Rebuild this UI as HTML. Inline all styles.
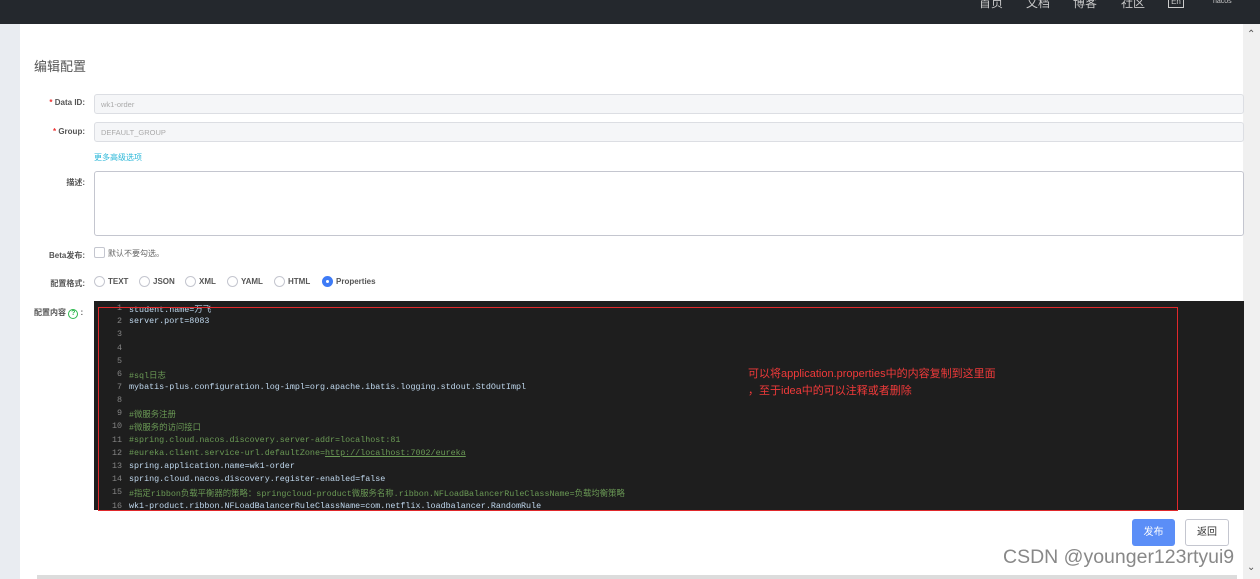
<!DOCTYPE html>
<html><head><meta charset="utf-8"><style>
*{margin:0;padding:0;box-sizing:border-box}
body{width:1260px;height:579px;overflow:hidden;background:#fff;font-family:"Liberation Sans","Noto Sans CJK SC",sans-serif;position:relative}
.top{position:absolute;left:0;top:0;width:1260px;height:24px;background:#24282d;color:#c8c8c8;font-size:12px}
.top span{position:absolute;top:-6px}
.left{position:absolute;left:0;top:24px;width:20px;height:555px;background:#e9ecf1}
.sb{position:absolute;left:1243px;top:24px;width:17px;height:555px;background:#f0f0f0}
.hs{position:absolute;left:20px;top:573px;width:1223px;height:6px;background:#fff}
.hs div{position:absolute;left:17px;top:2px;width:1200px;height:4px;background:#dcdcdc}
.abs{position:absolute}
.lbl{position:absolute;font-size:8px;font-weight:bold;color:#555;text-align:right;width:80px;left:5px}
.star{color:#e33}
.inp{position:absolute;left:94px;width:1150px;height:20px;background:#f5f6f8;border:1px solid #dcdee3;border-radius:3px;font-size:7.5px;color:#aaa;padding:5px 6px}
.radio{position:absolute;top:276px;width:11px;height:11px;border:1px solid #c4c6cf;border-radius:50%}
.rt{position:absolute;top:277px;font-size:8px;font-weight:bold;color:#555}
.ed{position:absolute;left:94px;top:301px;width:1150px;height:209px;background:#1e1e1e;overflow:hidden;font-family:"Liberation Mono","Noto Sans CJK SC",monospace;font-size:8.4px;color:#c0d8ee}
.ln{position:absolute;left:0;width:28px;text-align:right;color:#858585}
.cd{position:absolute;left:35px;white-space:pre}
.cm{color:#6a9955}
</style></head><body>
<div class="top">
<span style="left:979px">首页</span><span style="left:1026px">文档</span><span style="left:1073px">博客</span><span style="left:1121px">社区</span>
<span style="left:1168px;top:-4px;border:1px solid #ccc;width:16px;height:12px;font-size:8px;text-align:center">En</span>
<span style="left:1213px;top:-2px;font-size:7px">nacos</span>
</div>
<div class="left"></div>
<div class="sb"><div style="position:absolute;left:4px;top:5px;font-size:10px;color:#555">&#8963;</div><div style="position:absolute;left:4px;top:538px;font-size:10px;color:#555">&#8964;</div></div>
<div class="hs"><div></div></div>
<div class="abs" style="left:34px;top:56px;font-size:13px;color:#555">编辑配置</div>
<div class="lbl" style="top:98px"><span class="star">*</span> Data ID:</div>
<div class="inp" style="top:94px">wk1-order</div>
<div class="lbl" style="top:127px"><span class="star">*</span> Group:</div>
<div class="inp" style="top:122px">DEFAULT_GROUP</div>
<div class="abs" style="left:94px;top:152px;font-size:8px;color:#2ab7d8">更多高级选项</div>
<div class="lbl" style="top:177px">描述:</div>
<div class="abs" style="left:94px;top:171px;width:1150px;height:65px;border:1px solid #c4c6cf;border-radius:3px"></div>
<div class="lbl" style="top:250px">Beta发布:</div>
<div class="abs" style="left:94px;top:247px;width:11px;height:11px;border:1px solid #c4c6cf;border-radius:2px"></div>
<div class="abs" style="left:108px;top:248px;font-size:8px;color:#666">默认不要勾选。</div>
<div class="lbl" style="top:278px">配置格式:</div>
<div class="radio" style="left:94px"></div><div class="rt" style="left:108px">TEXT</div>
<div class="radio" style="left:139px"></div><div class="rt" style="left:153px">JSON</div>
<div class="radio" style="left:185px"></div><div class="rt" style="left:199px">XML</div>
<div class="radio" style="left:227px"></div><div class="rt" style="left:241px">YAML</div>
<div class="radio" style="left:274px"></div><div class="rt" style="left:288px">HTML</div>
<div class="radio" style="left:322px;background:#3e7bf6;border-color:#3e7bf6"><div style="position:absolute;left:3px;top:3px;width:3px;height:3px;background:#fff;border-radius:50%"></div></div><div class="rt" style="left:336px">Properties</div>
<div class="abs" style="left:34px;top:307px;font-size:8px;font-weight:bold;color:#555">配置内容 <span style="display:inline-block;width:10px;height:10px;border:1px solid #2db84d;border-radius:50%;color:#2db84d;font-size:7px;text-align:center;line-height:8px">?</span> :</div>
<div class="ed">
<div class="ln" style="top:2px">1</div><div class="cd" style="top:2px">student.name=万飞</div>
<div class="ln" style="top:15px">2</div><div class="cd" style="top:15px">server.port=8083</div>
<div class="ln" style="top:28px">3</div>
<div class="ln" style="top:42px">4</div>
<div class="ln" style="top:55px">5</div>
<div class="ln" style="top:68px">6</div><div class="cd cm" style="top:68px">#sql日志</div>
<div class="ln" style="top:81px">7</div><div class="cd" style="top:81px">mybatis-plus.configuration.log-impl=org.apache.ibatis.logging.stdout.StdOutImpl</div>
<div class="ln" style="top:94px">8</div>
<div class="ln" style="top:107px">9</div><div class="cd cm" style="top:107px">#微服务注册</div>
<div class="ln" style="top:120px">10</div><div class="cd cm" style="top:120px">#微服务的访问接口</div>
<div class="ln" style="top:134px">11</div><div class="cd cm" style="top:134px">#spring.cloud.nacos.discovery.server-addr=localhost:81</div>
<div class="ln" style="top:147px">12</div><div class="cd cm" style="top:147px">#eureka.client.service-url.defaultZone=<u>http://localhost:7002/eureka</u></div>
<div class="ln" style="top:160px">13</div><div class="cd" style="top:160px">spring.application.name=wk1-order</div>
<div class="ln" style="top:173px">14</div><div class="cd" style="top:173px">spring.cloud.nacos.discovery.register-enabled=false</div>
<div class="ln" style="top:186px">15</div><div class="cd cm" style="top:186px">#指定ribbon负载平衡器的策略：springcloud-product微服务名称.ribbon.NFLoadBalancerRuleClassName=负载均衡策略</div>
<div class="ln" style="top:200px">16</div><div class="cd" style="top:200px">wk1-product.ribbon.NFLoadBalancerRuleClassName=com.netflix.loadbalancer.RandomRule</div>
</div>
<div class="abs" style="left:98px;top:307px;width:1080px;height:204px;border:1px solid #e0282b"></div>
<div class="abs" style="left:748px;top:366px;font-size:11px;color:#f03a3a;line-height:17px">可以将application.properties中的内容复制到这里面<br>，至于idea中的可以注释或者删除</div>
<div class="abs" style="left:1132px;top:519px;width:43px;height:27px;background:#5b8ef7;border-radius:3px;color:#fff;font-size:10px;text-align:center;line-height:27px">发布</div>
<div class="abs" style="left:1185px;top:519px;width:44px;height:27px;border:1px solid #c4c6cf;border-radius:3px;color:#333;font-size:10px;text-align:center;line-height:25px">返回</div>
<div class="abs" style="left:1003px;top:546px;font-size:19.5px;color:#888;white-space:nowrap">CSDN @younger123rtyui9</div>
</body></html>
